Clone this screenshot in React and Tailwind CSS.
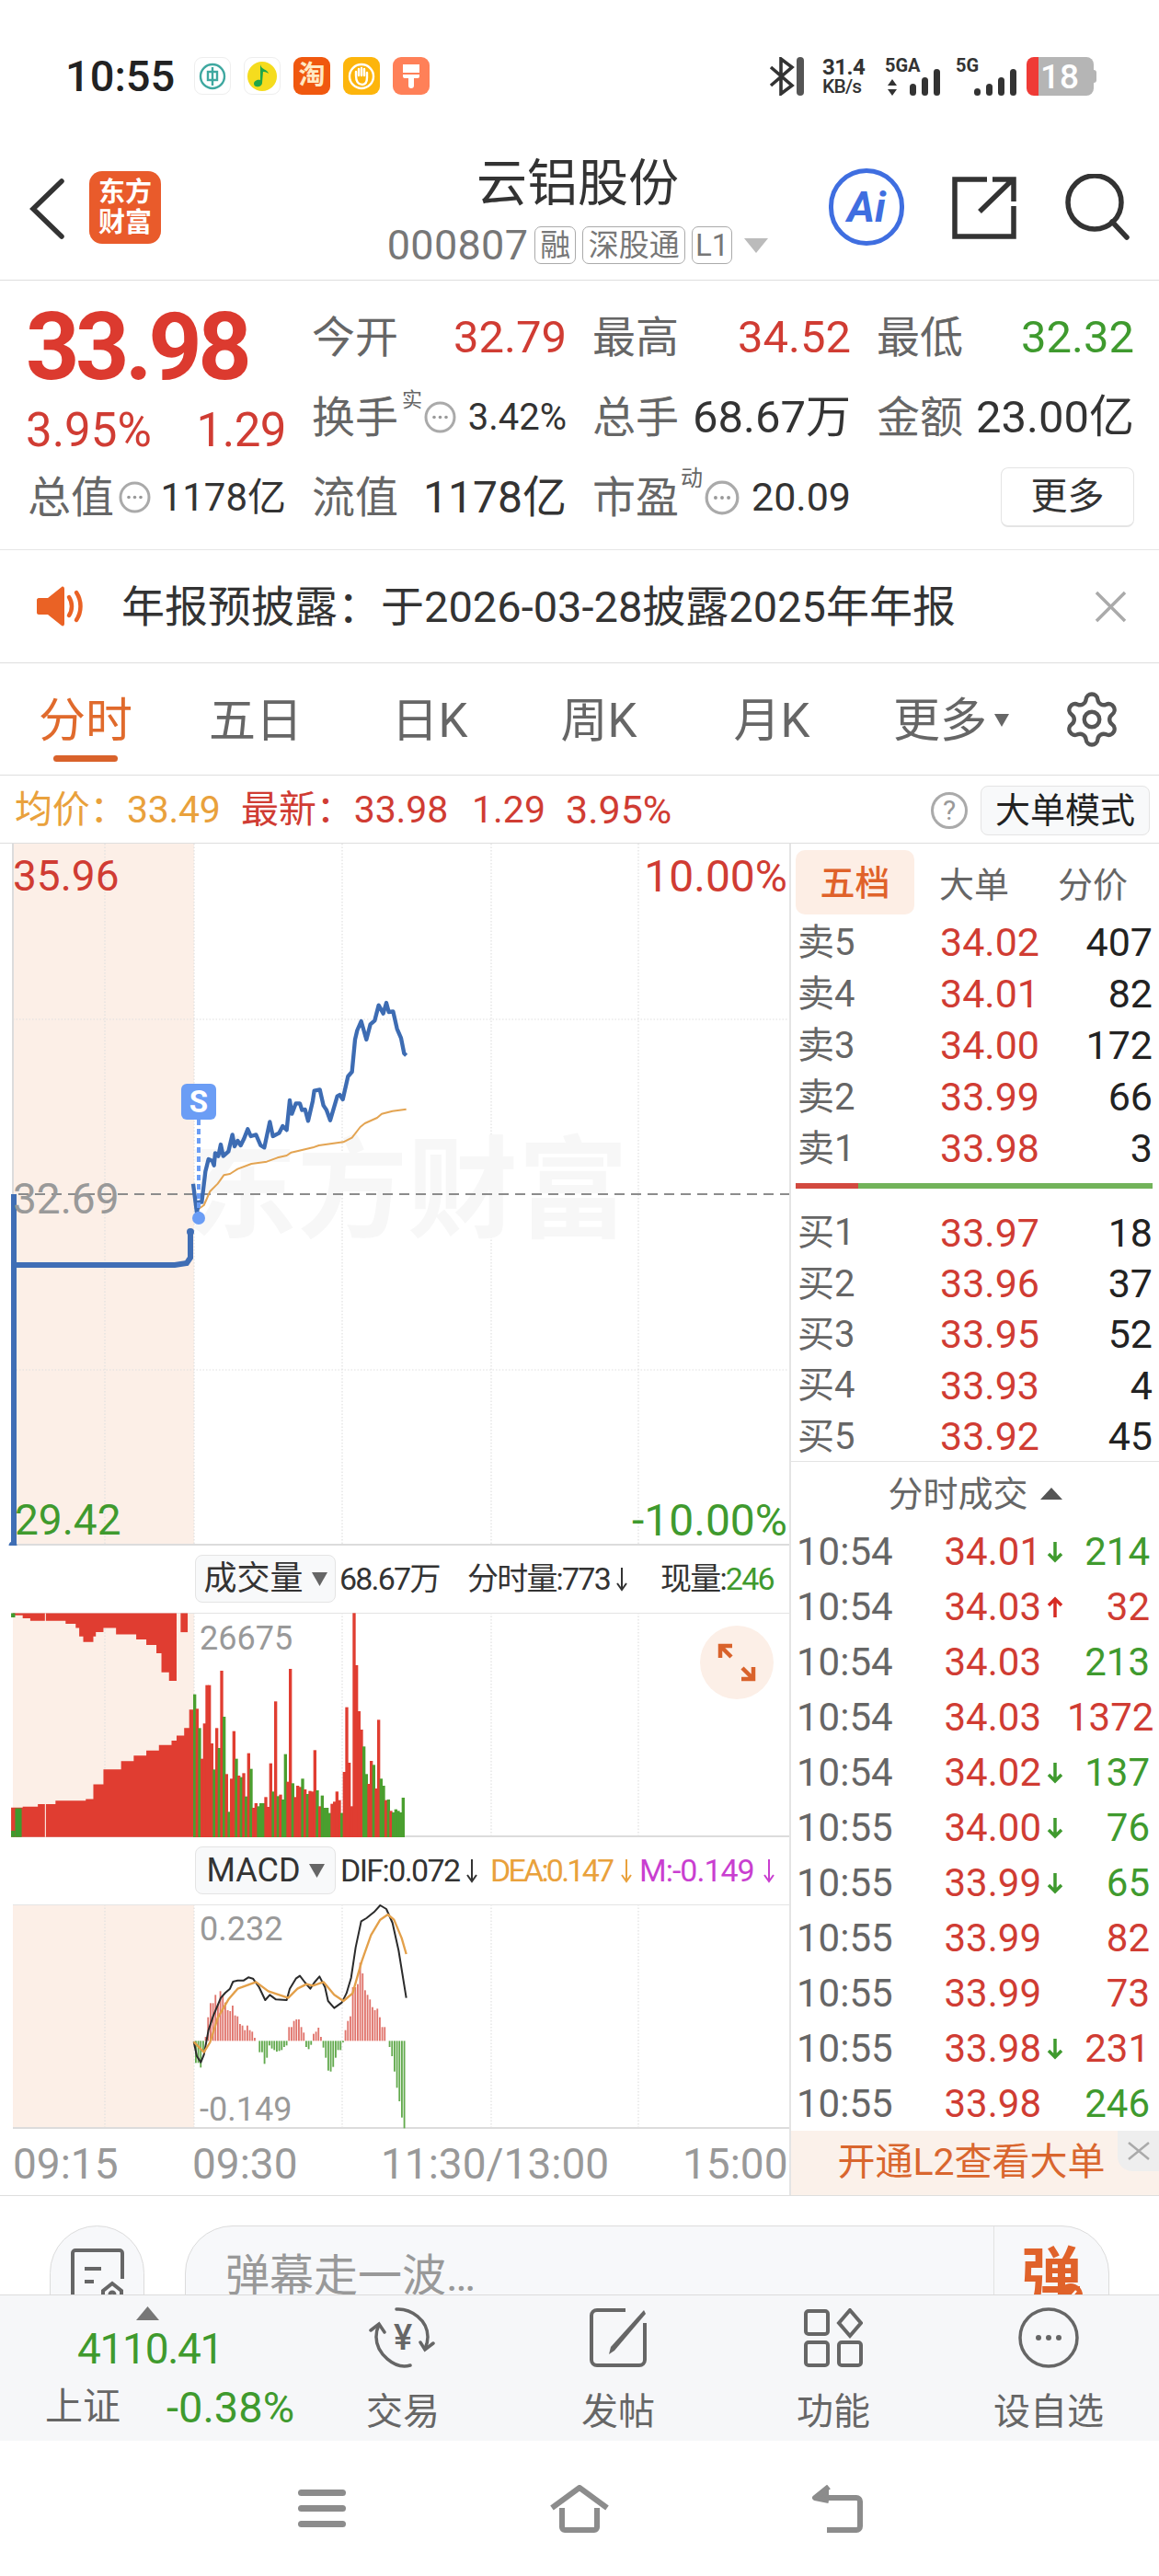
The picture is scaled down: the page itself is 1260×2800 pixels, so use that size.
import React from "react";
import { Settings } from "lucide-react";

const FONT = "font-[family-name:Roboto,'Noto_Sans_CJK_SC',sans-serif]";
const RED = "text-[#d03c33]";
const GREEN = "text-[#3f9a2e]";

// chart series below are in the plot's own enlarged units, scaled down by a <g> transform
const PRICE_LINE =
  "30,740 42,835 48,800 58,800 70,700 80,660 92,665 98,680 102,640 112,650 120,612 128,650 145,635 158,580 165,618 175,600 185,615 195,595 208,562 218,585 235,580 250,615 262,622 280,538 290,585 310,575 322,552 335,565 345,468 352,512 365,478 378,478 385,500 395,498 405,535 420,470 425,437 443,433 455,485 465,500 477,533 500,455 508,450 518,465 535,390 548,375 558,270 565,240 578,210 595,270 608,220 622,208 635,158 650,185 660,150 668,180 682,178 695,235 708,265 718,315 725,322";
const AVG_LINE =
  "48,822 65,810 85,765 110,740 130,712 150,708 175,692 220,675 270,668 305,655 335,648 350,638 420,622 440,615 520,604 548,590 575,555 590,543 630,525 645,512 680,503 725,497";

const VOL_BARS = [
  ["g", 305], ["r", 352], ["g", 415], ["r", 515], ["r", 400], ["r", 275], ["r", 275], ["r", 465], ["g", 550], ["r", 415],
  ["g", 480], ["r", 228], ["g", 378], ["r", 565], ["g", 688], ["r", 580], ["r", 425], ["g", 515], ["r", 570], ["g", 575],
  ["r", 562], ["g", 638], ["r", 497], ["g", 548], ["r", 675], ["r", 660], ["g", 670], ["g", 660], ["g", 660], ["r", 640],
  ["r", 672], ["r", 530], ["g", 622], ["r", 328], ["g", 637], ["r", 632], ["g", 648], ["g", 500], ["r", 590], ["r", 222],
  ["g", 595], ["r", 640], ["r", 603], ["r", 607], ["g", 580], ["r", 615], ["g", 630], ["r", 620], ["r", 622], ["r", 487],
  ["g", 618], ["r", 670], ["g", 635], ["g", 675], ["g", 675], ["g", 692], ["r", 662], ["r", 655], ["r", 622], ["r", 650],
  ["g", 692], ["r", 558], ["r", 347], ["r", 528], ["r", 670], ["r", 40], ["r", 210], ["r", 360], ["r", 420], ["g", 475],
  ["g", 565], ["r", 597], ["r", 522], ["g", 535], ["r", 612], ["r", 388], ["g", 580], ["g", 603], ["r", 650], ["g", 648],
  ["r", 685], ["g", 690], ["g", 680], ["g", 685], ["g", 690], ["g", 642],
];

// call-auction volume before 09:30, hanging from the top and rising from the bottom
const AUCTION_TOP = [
  [25, 165], [45, 172], [60, 178], [110, 178], [130, 185], [150, 195], [157, 215], [165, 228], [185, 215], [190, 205],
  [205, 195], [230, 210], [250, 210], [270, 222], [290, 235], [310, 255], [320, 300], [335, 320], [350, 327],
];
const AUCTION_BOTTOM = [
  [22, 620], [45, 618], [75, 612], [110, 604], [170, 600], [185, 565], [205, 530], [240, 510], [265, 497], [290, 485],
  [315, 472], [340, 462], [350, 450], [365, 432], [375, 388], [385, 350],
];
const stepped = (pts) =>
  pts.map(([x, y], i) => (i ? `${x},${pts[i - 1][1]} ${x},${y}` : `${x},${y}`)).join(" ");

// histogram tops, drawn from the zero line at 475
const MACD_BARS = [
  547, 547, 562, 510, 462, 398, 352, 352, 325, 355, 313, 328, 350, 375, 378, 360, 392, 395, 420, 425, 440, 425, 440, 445, 465,
  475, 512, 512, 550, 530, 490, 500, 505, 510, 508, 505, 495, 490, 430, 430, 410, 405, 405, 430, 448, 495, 502, 488, 452, 445,
  432, 462, 497, 530, 572, 575, 560, 530, 505, 505, 480, 440, 410, 395, 300, 300, 290, 220, 255, 310, 325, 340, 365, 375, 370,
  398, 430, 430, 475, 495, 525, 575, 628, 672, 725, 760,
];
const DIF_LINE =
  "32,478 42,525 55,545 65,520 80,440 95,395 120,335 135,318 150,305 160,282 175,278 195,278 210,268 225,272 245,300 265,342 280,325 300,340 335,342 345,305 365,272 378,263 395,285 412,305 425,285 442,265 460,300 470,345 490,368 515,350 530,320 545,270 560,170 578,85 595,75 620,55 640,33 660,45 680,90 700,180 725,335";
const DEA_LINE =
  "32,478 65,512 85,480 110,400 145,340 175,305 235,283 275,313 340,335 370,305 400,290 420,295 455,283 490,325 520,345 550,320 580,215 610,130 640,80 665,63 685,80 710,140 725,192";

const ASKS = [
  ["卖5", "34.02", "407"],
  ["卖4", "34.01", "82"],
  ["卖3", "34.00", "172"],
  ["卖2", "33.99", "66"],
  ["卖1", "33.98", "3"],
];
const BIDS = [
  ["买1", "33.97", "18"],
  ["买2", "33.96", "37"],
  ["买3", "33.95", "52"],
  ["买4", "33.93", "4"],
  ["买5", "33.92", "45"],
];
const TICKS = [
  ["10:54", "34.01", "down", "214", "g"],
  ["10:54", "34.03", "up", "32", "r"],
  ["10:54", "34.03", "", "213", "g"],
  ["10:54", "34.03", "", "1372", "r"],
  ["10:54", "34.02", "down", "137", "g"],
  ["10:55", "34.00", "down", "76", "g"],
  ["10:55", "33.99", "down", "65", "g"],
  ["10:55", "33.99", "", "82", "r"],
  ["10:55", "33.99", "", "73", "r"],
  ["10:55", "33.98", "down", "231", "r"],
  ["10:55", "33.98", "", "246", "g"],
];

const Signal = ({ heights }) => (
  <div className="flex items-end gap-[6px]">
    {heights.map((h, i) => (
      <div key={i} className="w-[7px] rounded-full bg-[#333]" style={{ height: h }} />
    ))}
  </div>
);

const AppIcon = ({ className, children }) => (
  <div className={`flex h-[41px] w-[40px] items-center justify-center rounded-[9px] ${className}`}>{children}</div>
);

const StatusBar = () => (
  <div className="flex h-[148px] items-start pt-[62px]">
    <span className="ml-[71px] w-[122px] text-[47px] leading-[42px] font-medium text-[#222]">10:55</span>
    <div className="ml-[18px] flex gap-[14px]">
      <AppIcon className="border border-[#eee] bg-white">
        <svg width="32" height="32" viewBox="0 0 32 32" fill="none" stroke="#3fa8a0" strokeWidth="2.4">
          <circle cx="16" cy="16" r="13" />
          <rect x="11" y="11" width="10" height="9" />
          <path d="M16 6v20" />
        </svg>
      </AppIcon>
      <AppIcon className="border border-[#eee] bg-white">
        <svg width="34" height="36" viewBox="0 0 34 36">
          <circle cx="17" cy="18" r="16" fill="#f5dc1e" />
          <path d="M15 5c1 6 8 5 9 10-3-2-5-2-6-2l-1 12c0 5-9 6-9 1 0-3 4-5 7-4z" fill="#1fa64a" />
        </svg>
      </AppIcon>
      <AppIcon className="bg-[#f0580f]">
        <span className="text-[29px] leading-none font-bold text-[#ffe9c4]">淘</span>
      </AppIcon>
      <AppIcon className="bg-[#fdb50c]">
        <svg width="32" height="32" viewBox="0 0 32 32" fill="none" stroke="#fff" strokeWidth="2.4" strokeLinecap="round">
          <circle cx="16" cy="16" r="13" />
          <path d="M10 15v-4M13 15V8M16 15V7M19 15V8M22 17v-5M10 15c0 7 3 10 7 10s5-3 5-8" />
        </svg>
      </AppIcon>
      <AppIcon className="bg-[#ff8058]">
        <svg width="24" height="32" viewBox="0 0 24 32" fill="#fff">
          <path d="M3 3h18v13a2 2 0 0 1-2 2h-4v8a3 3 0 0 1-6 0v-8H5a2 2 0 0 1-2-2z" />
          <rect x="3" y="12" width="18" height="2" fill="#ff8058" />
        </svg>
      </AppIcon>
    </div>
    <div className="ml-auto flex items-start">
      <svg width="28" height="42" viewBox="0 0 28 42" fill="none" stroke="#333" strokeWidth="3.6">
        <path d="M2 11l23 20-12 9V2l12 9L2 31" />
      </svg>
      <div className="ml-[2px] h-[42px] w-[8px] rounded-full bg-[#555]" />
      <div className="ml-[20px] flex w-[52px] flex-col text-[#333]">
        <span className="text-[24px] leading-[22px] font-bold tracking-[-0.5px]">31.4</span>
        <span className="text-[21px] leading-[20px] font-medium tracking-[-0.8px]">KB/s</span>
      </div>
      <div className="ml-[16px] flex w-[66px] flex-col">
        <span className="text-[20px] leading-[18px] font-bold text-[#333]">5GA</span>
        <div className="mt-[-5px] flex items-end">
          <svg className="mr-[14px] ml-[3px]" width="10" height="18" viewBox="0 0 10 18" fill="#333">
            <path d="M5 0l5 7H0zM5 18l-5-7h10z" />
          </svg>
          <Signal heights={[13, 20, 29]} />
        </div>
      </div>
      <div className="ml-[11px] flex w-[66px] flex-col">
        <span className="text-[20px] leading-[18px] font-bold text-[#333]">5G</span>
        <div className="mt-[-5px] flex justify-end">
          <Signal heights={[8, 13, 20, 29]} />
        </div>
      </div>
      <div className="mr-[68px] ml-[11px] flex h-[42px] items-center">
        <div className="h-full w-[13px] rounded-l-[8px] bg-[#ef3b36]" />
        <div className="flex h-full w-[60px] items-center rounded-r-[8px] bg-[#b5b5b5] pl-[2px]">
          <span className="text-[37px] leading-none font-medium text-white">18</span>
        </div>
        <div className="h-[14px] w-[3px] rounded-r bg-[#b5b5b5]" />
      </div>
    </div>
  </div>
);

const NavBar = () => (
  <div className="relative flex h-[157px] items-start border-b border-[#dedede]">
    <svg className="mt-[46px] ml-[30px]" width="42" height="66" viewBox="0 0 42 66" fill="none" stroke="#333" strokeWidth="5.5" strokeLinecap="round">
      <path d="M37 3L6 33l31 30" />
    </svg>
    <div className="mt-[38px] ml-[25px] flex h-[79px] w-[78px] flex-col items-center justify-center rounded-[14px] bg-[#e95b2b] text-[29px] leading-[33px] font-bold text-[#fff]">
      <span>东方</span>
      <span>财富</span>
    </div>
    <div className="ml-[243px] flex w-[420px] flex-col items-center">
      <span className="mt-[22px] text-[55px] leading-[58px] text-[#333]">云铝股份</span>
      <div className="mt-[16px] flex items-center">
        <span className="text-[45px] leading-none tracking-[0.3px] text-[#777]">000807</span>
        <span className="ml-[7px] flex h-[41px] w-[45px] items-center justify-center rounded-[7px] border border-[#aaa] text-[33px] leading-none text-[#777]">融</span>
        <span className="ml-[7px] flex h-[41px] w-[112px] items-center justify-center rounded-[7px] border border-[#aaa] text-[33px] leading-none text-[#777]">深股通</span>
        <span className="ml-[7px] flex h-[41px] w-[44px] items-center justify-center rounded-[7px] border border-[#aaa] text-[33px] leading-none text-[#777]">L1</span>
        <svg className="ml-[13px]" width="26" height="16" viewBox="0 0 26 16" fill="#bbb">
          <path d="M0 0h26L13 16z" />
        </svg>
      </div>
    </div>
    <div className="relative mt-[35px] ml-[63px] flex h-[84px] w-[82px] items-center justify-center rounded-full border-[5px] border-[#3f6ee0]">
      <span className="text-[46px] leading-none font-bold text-[#3f6ee0] italic">Ai</span>
    </div>
    <svg className="mt-[44px] ml-[52px]" width="70" height="68" viewBox="0 0 70 68" fill="none" stroke="#333" strokeWidth="5.5">
      <path d="M38 3H3v62h64V32" />
      <path d="M30 38L64 5M44 3h23v24" />
    </svg>
    <svg className="mt-[41px] ml-[52px]" width="72" height="72" viewBox="0 0 72 72" fill="none" stroke="#333" strokeWidth="5.5" strokeLinecap="round">
      <circle cx="33" cy="31" r="29" />
      <path d="M52 52l16 17" />
    </svg>
  </div>
);

const Dots = ({ size = 35 }) => (
  <svg width={size} height={size} viewBox="0 0 35 35" fill="none">
    <circle cx="17.5" cy="17.5" r="15.5" stroke="#aaa" strokeWidth="3" />
    <circle cx="11" cy="17.5" r="1.8" fill="#999" />
    <circle cx="17.5" cy="17.5" r="1.8" fill="#999" />
    <circle cx="24" cy="17.5" r="1.8" fill="#999" />
  </svg>
);

const Stat = ({ label, value, color = "text-[#333]", size = "text-[48px]" }) => (
  <div className="flex items-center justify-between">
    <span className="text-[47px] leading-none text-[#666]">{label}</span>
    <span className={`${size} leading-none ${color}`}>{value}</span>
  </div>
);

const Quote = () => (
  <div className="grid h-[293px] grid-cols-[283px_277px_281px_280px] grid-rows-[87px_87px_87px] content-start gap-x-[28px] border-b border-[#e6e6e6] pt-[18px] pl-[28px]">
    <div className="row-span-2 flex flex-col">
      <span className="mt-[12px] text-[102px] leading-[84px] font-bold tracking-[-4.5px] text-[#dc3a2f]">33.98</span>
      <div className={`mt-[23px] flex justify-between text-[51px] leading-none ${RED}`}>
        <span>3.95%</span>
        <span className="tracking-[-0.5px]">1.29</span>
      </div>
    </div>
    <Stat label="今开" value="32.79" color={RED} size="text-[49px]" />
    <Stat label="最高" value="34.52" color={RED} size="text-[49px]" />
    <Stat label="最低" value="32.32" color={GREEN} size="text-[49px]" />

    <div className="flex items-center">
      <span className="text-[47px] leading-none text-[#666]">换手</span>
      <span className="mt-[-38px] ml-[4px] w-[24px] text-[22px] leading-none text-[#666]">实</span>
      <Dots />
      <span className="ml-auto text-[40px] leading-none text-[#333]">3.42%</span>
    </div>
    <Stat label="总手" value="68.67万" size="text-[49px]" />
    <Stat label="金额" value="23.00亿" size="text-[49px]" />

    <div className="flex items-center">
      <span className="ml-[2px] text-[47px] leading-none text-[#666]">总值</span>
      <span className="ml-[5px]">
        <Dots />
      </span>
      <span className="ml-auto text-[42px] leading-none text-[#333]">1178亿</span>
    </div>
    <Stat label="流值" value="1178亿" />
    <div className="flex items-center">
      <span className="text-[47px] leading-none text-[#666]">市盈</span>
      <span className="mt-[-42px] w-[28px] pl-[2px] text-[24px] leading-none text-[#666]">动</span>
      <Dots size={38} />
      <span className="ml-auto text-[43px] leading-none text-[#333]">20.09</span>
    </div>
    <div className="flex items-center justify-end">
      <span className="flex h-[65px] w-[145px] items-center justify-center rounded-[8px] border border-b-2 border-[#e4e4e4] text-[40px] leading-none text-[#333]">更多</span>
    </div>
  </div>
);

const Notice = () => (
  <div className="flex h-[123px] items-center border-b border-[#dedede]">
    <svg className="ml-[40px]" width="52" height="44" viewBox="0 0 52 44" fill="#ea6225">
      <path d="M2 13h10L27 1c1.5-1 3 0 3 2v38c0 2-1.5 3-3 2L12 31H2c-1 0-2-1-2-2V15c0-1 1-2 2-2z" />
      <path d="M35 12c4 6 4 14 0 20M43 7c6 9 6 21 0 30" fill="none" stroke="#ea6225" strokeWidth="4.5" strokeLinecap="round" />
    </svg>
    <span className="ml-[40px] text-[47px] leading-none text-[#333]">年报预披露：于2026-03-28披露2025年年报</span>
    <svg className="mr-[35px] ml-auto" width="35" height="35" viewBox="0 0 35 35" stroke="#aaa" strokeWidth="3.5">
      <path d="M2 2l31 31M33 2L2 33" />
    </svg>
  </div>
);

const Tabs = () => (
  <div className="flex h-[122px] border-b border-[#dedede]">
    <div className="grid h-full grid-cols-[186px_184px_194px_174px_202px_168px] items-center pt-[3px] text-[51px] leading-none text-[#666]">
      <div className="relative text-center text-[#e06a2c]">
        分时
        <div className="absolute top-[63px] left-[58px] h-[7px] w-[70px] rounded-full bg-[#d9622b]" />
      </div>
      <div className="text-center">五日</div>
      <div className="text-center">日K</div>
      <div className="text-center">周K</div>
      <div className="text-center">月K</div>
      <div className="flex items-center justify-center">
        <span className="ml-[20px]">更多</span>
        <svg className="ml-[8px]" width="16" height="16" viewBox="0 0 16 16" fill="#666">
          <path d="M0 1h16L8 15z" />
        </svg>
      </div>
    </div>
    <Settings className="mt-[28px] ml-[46px]" size={66} strokeWidth={1.6} color="#555" />
  </div>
);

const PriceLine = () => (
  <div className="flex h-[74px] items-center border-b border-[#dedede] pt-[2px] text-[41px] leading-none">
    <span className="ml-[16px] w-[246px] tracking-[-0.3px] text-[#e9a13c]">均价：33.49</span>
    <span className={`w-[251px] tracking-[-0.1px] ${RED}`}>最新：33.98</span>
    <span className={`w-[102px] ${RED}`}>1.29</span>
    <span className={`text-[43px] ${RED}`}>3.95%</span>
    <span className="mr-[14px] ml-auto flex h-[40px] w-[40px] items-center justify-center rounded-full border-[3px] border-[#aaa] text-[30px] text-[#999]">?</span>
    <span className="mr-[10px] flex h-[54px] w-[184px] items-center justify-center rounded-[8px] border border-[#e4e4e4] bg-[#f8f9fa] text-[38px] text-[#222]">大单模式</span>
  </div>
);

const GridLines = ({ y1, y2 }) => (
  <g stroke="#dfdfdf" strokeWidth="1.2" strokeDasharray="1.5 2">
    {[114, 211, 372, 534, 694].map((x) => (
      <line key={x} x1={x} x2={x} y1={y1} y2={y2} />
    ))}
  </g>
);

const MainChart = () => (
  <div className="relative h-[763px]">
    <svg className="absolute inset-0 h-full w-full" viewBox="0 917 858 763">
      <rect x="14" y="917" width="197" height="762" fill="#fcefe7" />
      <GridLines y1={917} y2={1679} />
      <path d="M14 1108h842M14 1489h842" stroke="#dfdfdf" strokeWidth="1" strokeDasharray="1.5 2" />
      <path d="M14 1679h844M14 917v762" stroke="#dcdcdc" strokeWidth="2" fill="none" />
    </svg>
    <div className="absolute top-[318px] left-[203px] text-[120px] leading-none font-bold whitespace-nowrap text-[#f7f7f7]">东方财富</div>
    <svg className="absolute inset-0 h-full w-full" viewBox="0 917 858 763">
      <path d="M20 1298h838" stroke="#8c8c8c" strokeWidth="2" strokeDasharray="11 7" />
      <path d="M15 1298v382" stroke="#3f6eb5" strokeWidth="6" />
      <circle cx="14" cy="1680" r="4.5" fill="#3f6eb5" />
      <path d="M15 1375h175l13-2 4-6v-28" stroke="#3f6eb5" strokeWidth="6" fill="none" />
      <circle cx="207" cy="1339" r="4" fill="#3f6eb5" />
      <g transform="translate(200 1040) scale(0.33333)" fill="none" strokeLinejoin="round">
        <polyline points={AVG_LINE} stroke="#e3a452" strokeWidth="6" />
        <polyline points={PRICE_LINE} stroke="#3d6cb3" strokeWidth="13" />
      </g>
      <path d="M216 1217v103" stroke="#6b9df5" strokeWidth="4" strokeDasharray="6 4" />
      <circle cx="216" cy="1324" r="7" fill="#6b9df5" />
      <rect x="197" y="1178" width="38" height="39" rx="6" fill="#6b9df5" />
    </svg>
    <span className="absolute top-[261px] left-[197px] flex h-[39px] w-[38px] items-center justify-center text-[33px] leading-none font-bold text-white">S</span>
    <span className={`absolute top-[12px] left-[14px] text-[46px] leading-none ${RED}`}>35.96</span>
    <span className={`absolute top-[12px] right-[2px] text-[48px] leading-none ${RED}`}>10.00%</span>
    <span className="absolute top-[363px] left-[14px] text-[46px] leading-none text-[#999]">32.69</span>
    <span className={`absolute top-[712px] left-[16px] text-[46px] leading-none ${GREEN}`}>29.42</span>
    <span className={`absolute top-[712px] right-[2px] text-[48px] leading-none ${GREEN}`}>-10.00%</span>
  </div>
);

const Pill = ({ children }) => (
  <div className="ml-[212px] flex h-[52px] w-[153px] items-center justify-center rounded-[8px] border border-[#e4e4e4] bg-[#f8f9fa]">
    <span className="text-[36px] leading-none tracking-normal text-[#333]">{children}</span>
    <svg className="ml-[9px]" width="17" height="15" viewBox="0 0 17 15" fill="#666">
      <path d="M0 0h17L8.5 15z" />
    </svg>
  </div>
);

const Arrow = ({ color }) => (
  <svg width="12" height="28" viewBox="0 0 12 28" fill="none" stroke={color} strokeWidth="2">
    <path d="M6 2v23M1 19l5 7 5-7" />
  </svg>
);

const VolumeHead = () => (
  <div className="flex h-[73px] items-start pt-[10px] text-[34px] leading-[52px] tracking-[-1.8px] text-[#333]">
    <Pill>成交量</Pill>
    <span className="ml-[4px] w-[139px]">68.67万</span>
    <span className="flex w-[210px] items-center">
      分时量:773
      <span className="ml-[7px]">
        <Arrow color="#333" />
      </span>
    </span>
    <span>现量:</span>
    <span className={GREEN}>246</span>
  </div>
);

const VolumeChart = () => (
  <div className="relative h-[244px]">
    <svg className="absolute inset-0 h-full w-full" viewBox="0 1753 858 244">
      <rect x="14" y="1753" width="197" height="244" fill="#fcefe7" />
      <GridLines y1={1753} y2={1997} />
      <path d="M14 1753.5h844" stroke="#e4e4e4" strokeWidth="1" />
      <path d="M14 1996h844" stroke="#dcdcdc" strokeWidth="2" />
      <g transform="translate(0 1680) scale(0.5485 0.4591)">
        <polygon fill="#e03d31" points={`25,160 ${stepped(AUCTION_TOP)} 350,160`} />
        <polygon fill="#e03d31" points="358,160 358,205 372,205 372,160" />
        <polygon fill="#e03d31" points={`${stepped(AUCTION_BOTTOM)} 385,690 22,690`} />
        <rect x="22" y="160" width="8" height="10" fill="#3f9a2e" />
        <rect x="30" y="622" width="13" height="68" fill="#3f9a2e" />
        <rect x="22" y="675" width="8" height="15" fill="#3f9a2e" />
        <rect x="89" y="160" width="2" height="530" fill="#fcefe7" />
      </g>
      <g transform="translate(200 1740) scale(0.33333)">
        {VOL_BARS.map(([c, top], i) => (
          <rect key={i} x={30 + 8 * i} y={top} width="10" height={771 - top} fill={c === "r" ? "#e03d31" : "#4a9f2f"} />
        ))}
      </g>
    </svg>
    <span className="absolute top-[10px] left-[217px] text-[36px] leading-none text-[#999]">26675</span>
    <div className="absolute top-[14px] left-[761px] flex h-[80px] w-[80px] items-center justify-center rounded-full bg-[#fcefe7]">
      <svg width="42" height="42" viewBox="0 0 42 42" fill="none" stroke="#d9622b" strokeWidth="4.5">
        <path d="M3 16V3h13M3 3l12 12M39 26v13H26M39 39L27 27" />
      </svg>
    </div>
  </div>
);

const MacdHead = () => (
  <div className="flex h-[73px] items-start pt-[10px] text-[34px] leading-[52px] tracking-[-1.6px]">
    <Pill>MACD</Pill>
    <span className="ml-[5px] flex w-[163px] items-center text-[#333]">
      DIF:0.072
      <span className="ml-[7px]">
        <Arrow color="#333" />
      </span>
    </span>
    <span className="flex w-[162px] items-center tracking-[-2.8px] text-[#e9a13c]">
      DEA:0.147
      <span className="ml-[10px]">
        <Arrow color="#e9a13c" />
      </span>
    </span>
    <span className="flex items-center tracking-[-1px] text-[#c93fd0]">
      M:-0.149
      <span className="ml-[10px]">
        <Arrow color="#c93fd0" />
      </span>
    </span>
  </div>
);

const MacdChart = () => (
  <div className="relative h-[244px]">
    <svg className="absolute inset-0 h-full w-full" viewBox="0 2070 858 244">
      <rect x="14" y="2070" width="197" height="244" fill="#fcefe7" />
      <GridLines y1={2070} y2={2314} />
      <path d="M14 2070.5h844" stroke="#e4e4e4" strokeWidth="1" />
      <path d="M14 2313h844" stroke="#dcdcdc" strokeWidth="2" />
      <g transform="translate(200 2060) scale(0.33333)">
        {MACD_BARS.map((top, i) =>
          top === 475 ? null : (
            <rect
              key={i}
              x={36 + 8 * i}
              y={Math.min(top, 475)}
              width="5.5"
              height={Math.abs(475 - top)}
              fill={top < 475 ? "#e0746c" : "#63aa4e"}
            />
          )
        )}
        <polyline points={DIF_LINE} fill="none" stroke="#2b2b2b" strokeWidth="6" strokeLinejoin="round" />
        <polyline points={DEA_LINE} fill="none" stroke="#e3a04a" strokeWidth="7" strokeLinejoin="round" />
      </g>
    </svg>
    <span className="absolute top-[9px] left-[217px] text-[36px] leading-none text-[#999]">0.232</span>
    <span className="absolute top-[205px] left-[217px] text-[36px] leading-none text-[#999]">-0.149</span>
  </div>
);

const TimeAxis = () => (
  <div className="flex h-[72px] items-center pt-[4px] text-[46px] leading-none text-[#999]">
    <span className="ml-[14px] w-[195px]">09:15</span>
    <span className="w-[205px]">09:30</span>
    <span className="w-[328px]">11:30/13:00</span>
    <span>15:00</span>
  </div>
);

const OrderRow = ({ label, price, qty, className }) => (
  <div className={`grid grid-cols-[263px_123px] items-center pt-[3px] pl-[7px] ${className}`}>
    <div className="flex items-center justify-between text-[43px] leading-none">
      <span className="text-[40px] text-[#666]">{label}</span>
      <span className={RED}>{price}</span>
    </div>
    <span className="text-right text-[43px] leading-none text-[#222]">{qty}</span>
  </div>
);

const TickArrow = ({ dir }) => {
  if (!dir) return null;
  const color = dir === "up" ? "#d62a22" : "#3f9a2e";
  return (
    <svg width="18" height="24" viewBox="0 0 18 24" fill="none" stroke={color} strokeWidth="3.5">
      {dir === "up" ? <path d="M9 23V3M2 10l7-7 7 7" /> : <path d="M9 1v20M2 14l7 7 7-7" />}
    </svg>
  );
};

const SidePanel = () => (
  <div className="flex w-[402px] flex-col border-l-2 border-[#e4e4e4]">
    <div className="flex h-[78px] items-start pt-[7px] pl-[5px] text-[38px] leading-none">
      <div className="flex h-[70px] w-[129px] items-center justify-center rounded-[10px] bg-[#fdeee5] pt-[2px] font-medium text-[#e0622a]">五档</div>
      <div className="w-[130px] pt-[19px] text-center text-[#666]">大单</div>
      <div className="w-[128px] pt-[19px] text-center text-[#666]">分价</div>
    </div>
    {ASKS.map(([label, price, qty]) => (
      <OrderRow key={label} label={label} price={price} qty={qty} className="h-[56px]" />
    ))}
    <div className="mt-[11px] ml-[5px] flex h-[6px] w-[388px] self-start">
      <div className="w-[68px] bg-[#d2493f]" />
      <div className="flex-1 bg-[#72b35a]" />
    </div>
    <div className="h-[19px] shrink-0" />
    {BIDS.map(([label, price, qty]) => (
      <OrderRow key={label} label={label} price={price} qty={qty} className="h-[55.4px]" />
    ))}
    <div className="flex h-[68px] items-center justify-center border-t border-[#e4e4e4] pt-[3px] text-[38px] leading-none text-[#666]">
      <span>分时成交</span>
      <svg className="ml-[13px]" width="24" height="13" viewBox="0 0 24 13" fill="#555">
        <path d="M12 0l12 13H0z" />
      </svg>
    </div>
    {TICKS.map(([time, price, dir, qty, side], i) => (
      <div key={i} className="grid h-[60px] grid-cols-[266px_28px_90px] items-center pt-[2px] pl-[6px] text-[42px] leading-none">
        <div className="flex justify-between">
          <span className="text-[#666]">{time}</span>
          <span className={RED}>{price}</span>
        </div>
        <div className="flex justify-center pl-[2px]">
          <TickArrow dir={dir} />
        </div>
        <span className={`text-right ${side === "g" ? GREEN : RED}`}>{qty}</span>
      </div>
    ))}
    <div className="relative flex flex-1 items-center justify-center bg-[#fbf1ea] pr-[8px] text-[41px] leading-none text-[#d9662e]">
      开通L2查看大单
      <div className="absolute top-0 right-0 flex h-[44px] w-[45px] items-center justify-center rounded-bl-[16px] bg-[#eeeeee]">
        <svg width="26" height="22" viewBox="0 0 26 22" stroke="#aaa" strokeWidth="2.5">
          <path d="M2 2l22 18M24 2L2 20" />
        </svg>
      </div>
    </div>
  </div>
);

const DanmuBar = () => (
  <div className="flex h-[108px] items-start overflow-hidden border-t border-[#dedede] pt-[32px]">
    <div className="ml-[54px] flex h-[132px] w-[103px] shrink-0 justify-center rounded-full border border-[#dcdcdc] bg-[#f7f8fa] pt-[24px]">
      <svg width="60" height="60" viewBox="0 0 60 60" fill="none" stroke="#666" strokeWidth="4">
        <path d="M31 58H6a3 3 0 0 1-3-3V5a3 3 0 0 1 3-3h48a3 3 0 0 1 3 3v28" />
        <path d="M16 22h18M16 36h10" />
        <path d="M36 58V46l10-8 10 8v12z" />
        <circle cx="46" cy="50" r="2.5" />
      </svg>
    </div>
    <div className="ml-[44px] flex h-[132px] w-[1005px] shrink-0 rounded-[52px] border border-[#dcdcdc] bg-[#f7f8fa]">
      <span className="mt-[30px] ml-[43px] text-[48px] leading-none text-[#999]">弹幕走一波…</span>
      <div className="relative ml-auto w-[125px] border-l border-[#e2e2e2]">
        <span className="absolute top-[22px] left-[29px] text-[66px] leading-none font-bold text-[#e0622a]">弹</span>
        <div className="absolute top-[62px] left-[70px] flex h-[26px] w-[26px] items-center justify-center rounded-full bg-[#e0622a]">
          <svg width="16" height="14" viewBox="0 0 16 14" fill="none" stroke="#fff" strokeWidth="2.5">
            <path d="M2 7l4 4 8-9" />
          </svg>
        </div>
      </div>
    </div>
  </div>
);

const ToolItem = ({ label, children }) => (
  <div className="flex w-[234px] flex-col items-center">
    <div className="flex h-[68px] items-center">{children}</div>
    <span className="mt-[27px] text-[40px] leading-none text-[#666]">{label}</span>
  </div>
);

const Toolbar = () => (
  <div className="flex h-[159px] items-start border-t border-[#dcdcdc] bg-[#f6f7f9] pt-[12px]">
    <div className="flex w-[321px] shrink-0 flex-col">
      <svg className="ml-[148px]" width="25" height="15" viewBox="0 0 25 15" fill="#777">
        <path d="M12.5 0L25 15H0z" />
      </svg>
      <span className={`mt-[9px] ml-[84px] text-[46px] leading-[44px] tracking-[-1.3px] ${GREEN}`}>4110.41</span>
      <div className="mt-[18px] flex items-center">
        <span className="ml-[49px] text-[41px] leading-none text-[#666]">上证</span>
        <span className={`ml-[50px] text-[47px] leading-none ${GREEN}`}>-0.38%</span>
      </div>
    </div>
    <div className="flex">
      <ToolItem label="交易">
        <div className="relative flex h-[66px] w-[78px] items-center justify-center">
          <svg className="absolute inset-0" width="78" height="66" viewBox="0 0 78 66" fill="none" stroke="#666" strokeWidth="3.5" strokeLinecap="round">
            <path d="M32 2c16-1 34 12 34 30 0 5-1 9-3 13M47 63C30 68 10 50 10 32c0-5 1-9 3-13" />
            <path d="M4 25l9-7 6 9M72 39l-9 7-5-8" />
          </svg>
          <span className="text-[38px] leading-none font-medium text-[#666]">¥</span>
        </div>
      </ToolItem>
      <ToolItem label="发帖">
        <svg width="64" height="66" viewBox="0 0 64 66" fill="none" stroke="#666" strokeWidth="4">
          <path d="M40 3H9a6 6 0 0 0-6 6v48a6 6 0 0 0 6 6h46a6 6 0 0 0 6-6V17" />
          <path d="M60 3L24 43l-2 8 6-4L62 7z" fill="#666" stroke="none" />
        </svg>
      </ToolItem>
      <ToolItem label="功能">
        <svg width="64" height="64" viewBox="0 0 64 64" fill="none" stroke="#666" strokeWidth="4">
          <rect x="2" y="3" width="24" height="25" rx="3" />
          <path d="M50 2l12 14-12 14-12-14z" />
          <rect x="2" y="37" width="24" height="25" rx="3" />
          <rect x="38" y="37" width="24" height="25" rx="3" />
        </svg>
      </ToolItem>
      <ToolItem label="设自选">
        <svg width="66" height="66" viewBox="0 0 66 66" fill="none" stroke="#666" strokeWidth="3.5">
          <circle cx="33" cy="33" r="31" />
          <circle cx="22" cy="33" r="3" fill="#666" stroke="none" />
          <circle cx="33" cy="33" r="3" fill="#666" stroke="none" />
          <circle cx="44" cy="33" r="3" fill="#666" stroke="none" />
        </svg>
      </ToolItem>
    </div>
  </div>
);

const SystemNav = () => (
  <div className="flex h-[147px] items-start pt-[48px]">
    <div className="ml-[324px] flex w-[52px] flex-col gap-[10px] pt-[5px]">
      <div className="h-[7px] rounded-full bg-[#8c8c8c]" />
      <div className="h-[7px] rounded-full bg-[#8c8c8c]" />
      <div className="h-[7px] rounded-full bg-[#8c8c8c]" />
    </div>
    <svg className="ml-[221px]" width="66" height="52" viewBox="0 0 66 52" fill="none" stroke="#8c8c8c" strokeWidth="6" strokeLinejoin="round">
      <path d="M3 25L33 3l30 22M14 25v21a3 3 0 0 0 3 3h32a3 3 0 0 0 3-3V25" />
    </svg>
    <svg className="ml-[220px]" width="56" height="52" viewBox="0 0 56 52" fill="none" stroke="#8c8c8c" strokeWidth="6" strokeLinejoin="round">
      <path d="M4 14h44a4 4 0 0 1 4 4v27a4 4 0 0 1-4 4H16" />
      <path d="M18 2L3 14l15 3" fill="#8c8c8c" />
    </svg>
  </div>
);

export default function App() {
  return (
    <div className={`flex h-[2800px] w-[1260px] flex-col overflow-hidden bg-white ${FONT}`}>
      <StatusBar />
      <NavBar />
      <Quote />
      <Notice />
      <Tabs />
      <PriceLine />
      <div className="flex h-[1469px]">
        <div className="flex w-[858px] shrink-0 flex-col">
          <MainChart />
          <VolumeHead />
          <VolumeChart />
          <MacdHead />
          <MacdChart />
          <TimeAxis />
        </div>
        <SidePanel />
      </div>
      <DanmuBar />
      <Toolbar />
      <SystemNav />
    </div>
  );
}
